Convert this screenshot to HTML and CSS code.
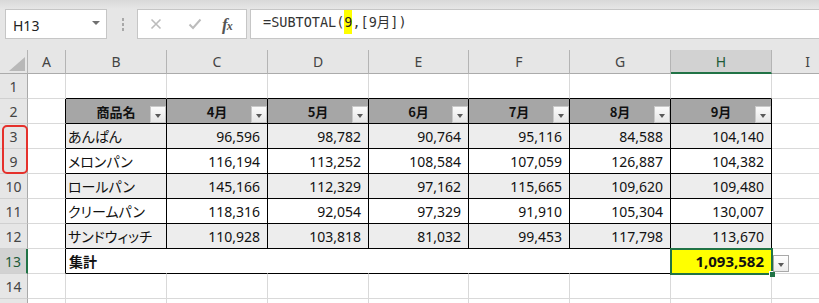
FILE: index.html
```html
<!DOCTYPE html>
<html lang="ja">
<head>
<meta charset="utf-8">
<link rel="stylesheet" href="styles.css">
</head>
<body>
<div class="app">
  <div class="ribbon-edge"></div>
  <div class="formula-row">
    <div class="namebox"><span class="nb-text">H13</span><span class="nb-arrow"></span></div>
    <div class="grip"><i></i><i></i><i></i></div>
    <div class="fx-box">
      <svg class="ico-x" width="12" height="12" viewBox="0 0 12 12"><path d="M1.5 1.5 L10.5 10.5 M10.5 1.5 L1.5 10.5" stroke="#bcbcbc" stroke-width="1.6" fill="none"/></svg>
      <svg class="ico-ok" width="14" height="12" viewBox="0 0 14 12"><path d="M1.5 6.5 L5 10 L12.5 1.5" stroke="#bcbcbc" stroke-width="2" fill="none"/></svg>
      <span class="fx">f<small>x</small></span>
    </div>
    <div class="formula"><span>=SUBTOTAL(</span><span class="hl">9</span><span>,[9月])</span></div>
  </div>

  <div class="sheet">
    <div class="row">
      <div class="c ch corner"><svg width="28" height="24" viewBox="0 0 28 24"><polygon points="25,7 25,21 9,21" fill="#b8b8b8"/></svg></div>
      <div class="c ch">A</div>
      <div class="c ch">B</div>
      <div class="c ch">C</div>
      <div class="c ch">D</div>
      <div class="c ch">E</div>
      <div class="c ch">F</div>
      <div class="c ch">G</div>
      <div class="c ch ch-sel">H</div>
      <div class="c ch">I</div>
    </div>

    <div class="row">
      <div class="c rh">1</div>
      <div class="c"></div>
      <div class="c tb-top"></div><div class="c tb-top"></div><div class="c tb-top"></div><div class="c tb-top"></div><div class="c tb-top"></div><div class="c tb-top"></div><div class="c tb-top"></div>
      <div class="c"></div>
    </div>

    <div class="row">
      <div class="c rh">2</div>
      <div class="c tb-left"></div>
      <div class="c th">商品名<span class="filter"></span></div>
      <div class="c th">4月<span class="filter"></span></div>
      <div class="c th">5月<span class="filter"></span></div>
      <div class="c th">6月<span class="filter"></span></div>
      <div class="c th">7月<span class="filter"></span></div>
      <div class="c th">8月<span class="filter"></span></div>
      <div class="c th">9月<span class="filter"></span></div>
      <div class="c"></div>
    </div>

    <div class="row band">
      <div class="c rh">3</div>
      <div class="c tb-left"></div>
      <div class="c td name">あんぱん</div>
      <div class="c td num">96,596</div>
      <div class="c td num">98,782</div>
      <div class="c td num">90,764</div>
      <div class="c td num">95,116</div>
      <div class="c td num">84,588</div>
      <div class="c td num">104,140</div>
      <div class="c"></div>
    </div>

    <div class="row">
      <div class="c rh">9</div>
      <div class="c tb-left"></div>
      <div class="c td name">メロンパン</div>
      <div class="c td num">116,194</div>
      <div class="c td num">113,252</div>
      <div class="c td num">108,584</div>
      <div class="c td num">107,059</div>
      <div class="c td num">126,887</div>
      <div class="c td num">104,382</div>
      <div class="c"></div>
    </div>

    <div class="row band">
      <div class="c rh">10</div>
      <div class="c tb-left"></div>
      <div class="c td name">ロールパン</div>
      <div class="c td num">145,166</div>
      <div class="c td num">112,329</div>
      <div class="c td num">97,162</div>
      <div class="c td num">115,665</div>
      <div class="c td num">109,620</div>
      <div class="c td num">109,480</div>
      <div class="c"></div>
    </div>

    <div class="row">
      <div class="c rh">11</div>
      <div class="c tb-left"></div>
      <div class="c td name">クリームパン</div>
      <div class="c td num">118,316</div>
      <div class="c td num">92,054</div>
      <div class="c td num">97,329</div>
      <div class="c td num">91,910</div>
      <div class="c td num">105,304</div>
      <div class="c td num">130,007</div>
      <div class="c"></div>
    </div>

    <div class="row band">
      <div class="c rh">12</div>
      <div class="c tb-left"></div>
      <div class="c td name">サンドウィッチ</div>
      <div class="c td num">110,928</div>
      <div class="c td num">103,818</div>
      <div class="c td num">81,032</div>
      <div class="c td num">99,453</div>
      <div class="c td num">117,798</div>
      <div class="c td num">113,670</div>
      <div class="c"></div>
    </div>

    <div class="row">
      <div class="c rh rh-sel">13</div>
      <div class="c tb-left"></div>
      <div class="c tt total-label">集計</div>
      <div class="c tt"></div>
      <div class="c tt"></div>
      <div class="c tt"></div>
      <div class="c tt"></div>
      <div class="c tt"></div>
      <div class="c tt total-val">1,093,582<span class="sel"><span class="handle"></span></span><span class="cell-drop"></span></div>
      <div class="c"></div>
    </div>

    <div class="row">
      <div class="c rh">14</div>
      <div class="c"></div><div class="c"></div><div class="c"></div><div class="c"></div><div class="c"></div><div class="c"></div><div class="c"></div><div class="c"></div><div class="c"></div>
    </div>

    <div class="row">
      <div class="c rh"></div>
      <div class="c"></div><div class="c"></div><div class="c"></div><div class="c"></div><div class="c"></div><div class="c"></div><div class="c"></div><div class="c"></div><div class="c"></div>
    </div>

    <div class="mark"></div>
  </div>
</div>
</body>
</html>
```

FILE: styles.css
```css
* { box-sizing: border-box; }

html, body {
  margin: 0;
  padding: 0;
}

body {
  width: 819px;
  height: 303px;
  overflow: hidden;
  background: #e6e6e6;
  font-family: "Noto Sans", "Noto Sans CJK JP", sans-serif;
}

.app {
  width: 819px;
  height: 303px;
  overflow: hidden;
  background: #e6e6e6;
}

.ribbon-edge {
  height: 9px;
  background: linear-gradient(#d9d9d9, #e6e6e6);
}

/* ---------- formula bar ---------- */
.formula-row {
  display: flex;
  height: 30px;
}

.namebox {
  margin-left: 5px;
  width: 102px;
  background: #fff;
  border: 1px solid #c6c6c6;
  display: flex;
  align-items: center;
  justify-content: space-between;
  padding: 0 6px 0 7px;
}

.nb-text {
  font-size: 14px;
  color: #222;
  padding-top: 2px;
}

.nb-arrow {
  width: 0;
  height: 0;
  border-left: 4px solid transparent;
  border-right: 4px solid transparent;
  border-top: 4px solid #707070;
  margin-bottom: 3px;
}

.grip {
  width: 30px;
  display: flex;
  flex-direction: column;
  align-items: center;
  justify-content: center;
  gap: 2px;
  padding-left: 2px;
}

.grip i {
  display: block;
  width: 2px;
  height: 3px;
  background: #a8a8a8;
}

.fx-box {
  width: 110px;
  background: #fff;
  border: 1px solid #c6c6c6;
  display: flex;
  align-items: center;
  padding-left: 12px;
}

.ico-x { margin-right: 26px; }
.ico-ok { margin-right: 20px; }

.fx {
  font-family: "Liberation Serif", serif;
  font-style: italic;
  font-weight: 700;
  font-size: 17px;
  color: #555;
  letter-spacing: -1px;
  line-height: 1;
}

.fx small {
  font-size: 12px;
}

.formula {
  flex: 1;
  margin-left: 3px;
  background: #fff;
  border-top: 1px solid #c6c6c6;
  border-bottom: 1px solid #c6c6c6;
  border-left: 1px solid #c6c6c6;
  padding-left: 12px;
  font-family: "DejaVu Sans Mono", "Noto Sans CJK JP", monospace;
  font-size: 13.5px;
  line-height: 24px;
  color: #333;
  white-space: nowrap;
}

.hl {
  display: inline-block;
  background: #ffff00;
  line-height: 24px;
  color: #222;
}

/* ---------- sheet ---------- */
.sheet {
  position: relative;
  margin-top: 11px;
  display: grid;
  grid-template-columns: 28px 38px 101px 101px 101px 100px 101px 101px 101px 72px;
  grid-template-rows: 24px repeat(10, 25px);
  background: #fff;
}

.row { display: contents; }

.c {
  position: relative;
  background: #fff;
  border-right: 1px solid #d9d9d9;
  border-bottom: 1px solid #d9d9d9;
  min-width: 0;
  white-space: nowrap;
}

.ch {
  background: #e6e6e6;
  border-right-color: #b4b4b4;
  border-bottom-color: #ababab;
  font-size: 14px;
  color: #444;
  display: flex;
  align-items: center;
  justify-content: center;
}

.corner { display: block; }
.corner svg { display: block; }

.ch-sel {
  background: #d2d2d2;
  border-bottom: 2px solid #217346;
  color: #1e5a38;
}

.rh {
  background: #e6e6e6;
  border-right-color: #a9a9a9;
  border-bottom-color: #d0d0d0;
  font-size: 14px;
  color: #444;
  display: flex;
  align-items: center;
  justify-content: center;
}

.rh-sel {
  background: #d2d2d2;
  border-right: 2px solid #217346;
  color: #1e5a38;
}

/* table borders */
.tb-top { border-bottom-color: #000; }
.tb-left { border-right-color: #000; }

.th {
  background: #a6a6a6;
  border-right-color: #000;
  border-bottom-color: #000;
  font-family: "Noto Sans CJK JP", sans-serif;
  font-weight: 700;
  font-size: 13px;
  color: #111;
  display: flex;
  align-items: center;
  justify-content: center;
}

.filter {
  position: absolute;
  right: 0;
  bottom: 0;
  width: 16px;
  height: 17px;
  background: linear-gradient(#fbfbfb, #e6e6e6);
  border: 1px solid #c9c9c9;
}

.filter::after,
.cell-drop::after {
  content: "";
  position: absolute;
  left: 4px;
  top: 7px;
  border-left: 3.5px solid transparent;
  border-right: 3.5px solid transparent;
  border-top: 4px solid #595959;
}

.td {
  border-right-color: #000;
  border-bottom-color: #000;
  display: flex;
  align-items: center;
  color: #111;
}

.band .td { background: #ededed; }

.name {
  font-family: "Noto Sans CJK JP", sans-serif;
  font-feature-settings: "palt";
  font-size: 14px;
  padding-left: 2px;
}

.num {
  justify-content: flex-end;
  padding-right: 7px;
  font-family: "Noto Sans", sans-serif;
  font-size: 14px;
  font-variant-numeric: tabular-nums;
}

.tt {
  border-right-color: #fff;
  border-bottom-color: #000;
  display: flex;
  align-items: center;
}

.total-label {
  font-family: "Noto Sans CJK JP", sans-serif;
  font-weight: 700;
  font-size: 14px;
  padding-left: 3px;
  color: #111;
}

.total-val {
  background: #ffff00;
  border-right-color: #000;
  justify-content: flex-end;
  padding-right: 7px;
  font-family: "Noto Sans", sans-serif;
  font-weight: 700;
  font-size: 15px;
  color: #111;
}

.sel {
  position: absolute;
  left: -1px;
  top: -1px;
  right: -2px;
  bottom: -2px;
  border: 2px solid #217346;
  z-index: 2;
}

.handle {
  position: absolute;
  right: -4px;
  bottom: -4px;
  width: 5px;
  height: 5px;
  background: #217346;
  box-shadow: -1px -1px 0 #fff;
}

.cell-drop {
  position: absolute;
  left: 102px;
  top: 6px;
  width: 16px;
  height: 17px;
  background: linear-gradient(#ffffff, #ececec);
  border: 1px solid #a9a9a9;
  z-index: 3;
}

/* red annotation around rows 3 and 9 */
.mark {
  position: absolute;
  left: 2px;
  top: 75px;
  width: 26px;
  height: 49px;
  border: 2px solid #e5312c;
  border-radius: 5px;
  z-index: 4;
}
```
